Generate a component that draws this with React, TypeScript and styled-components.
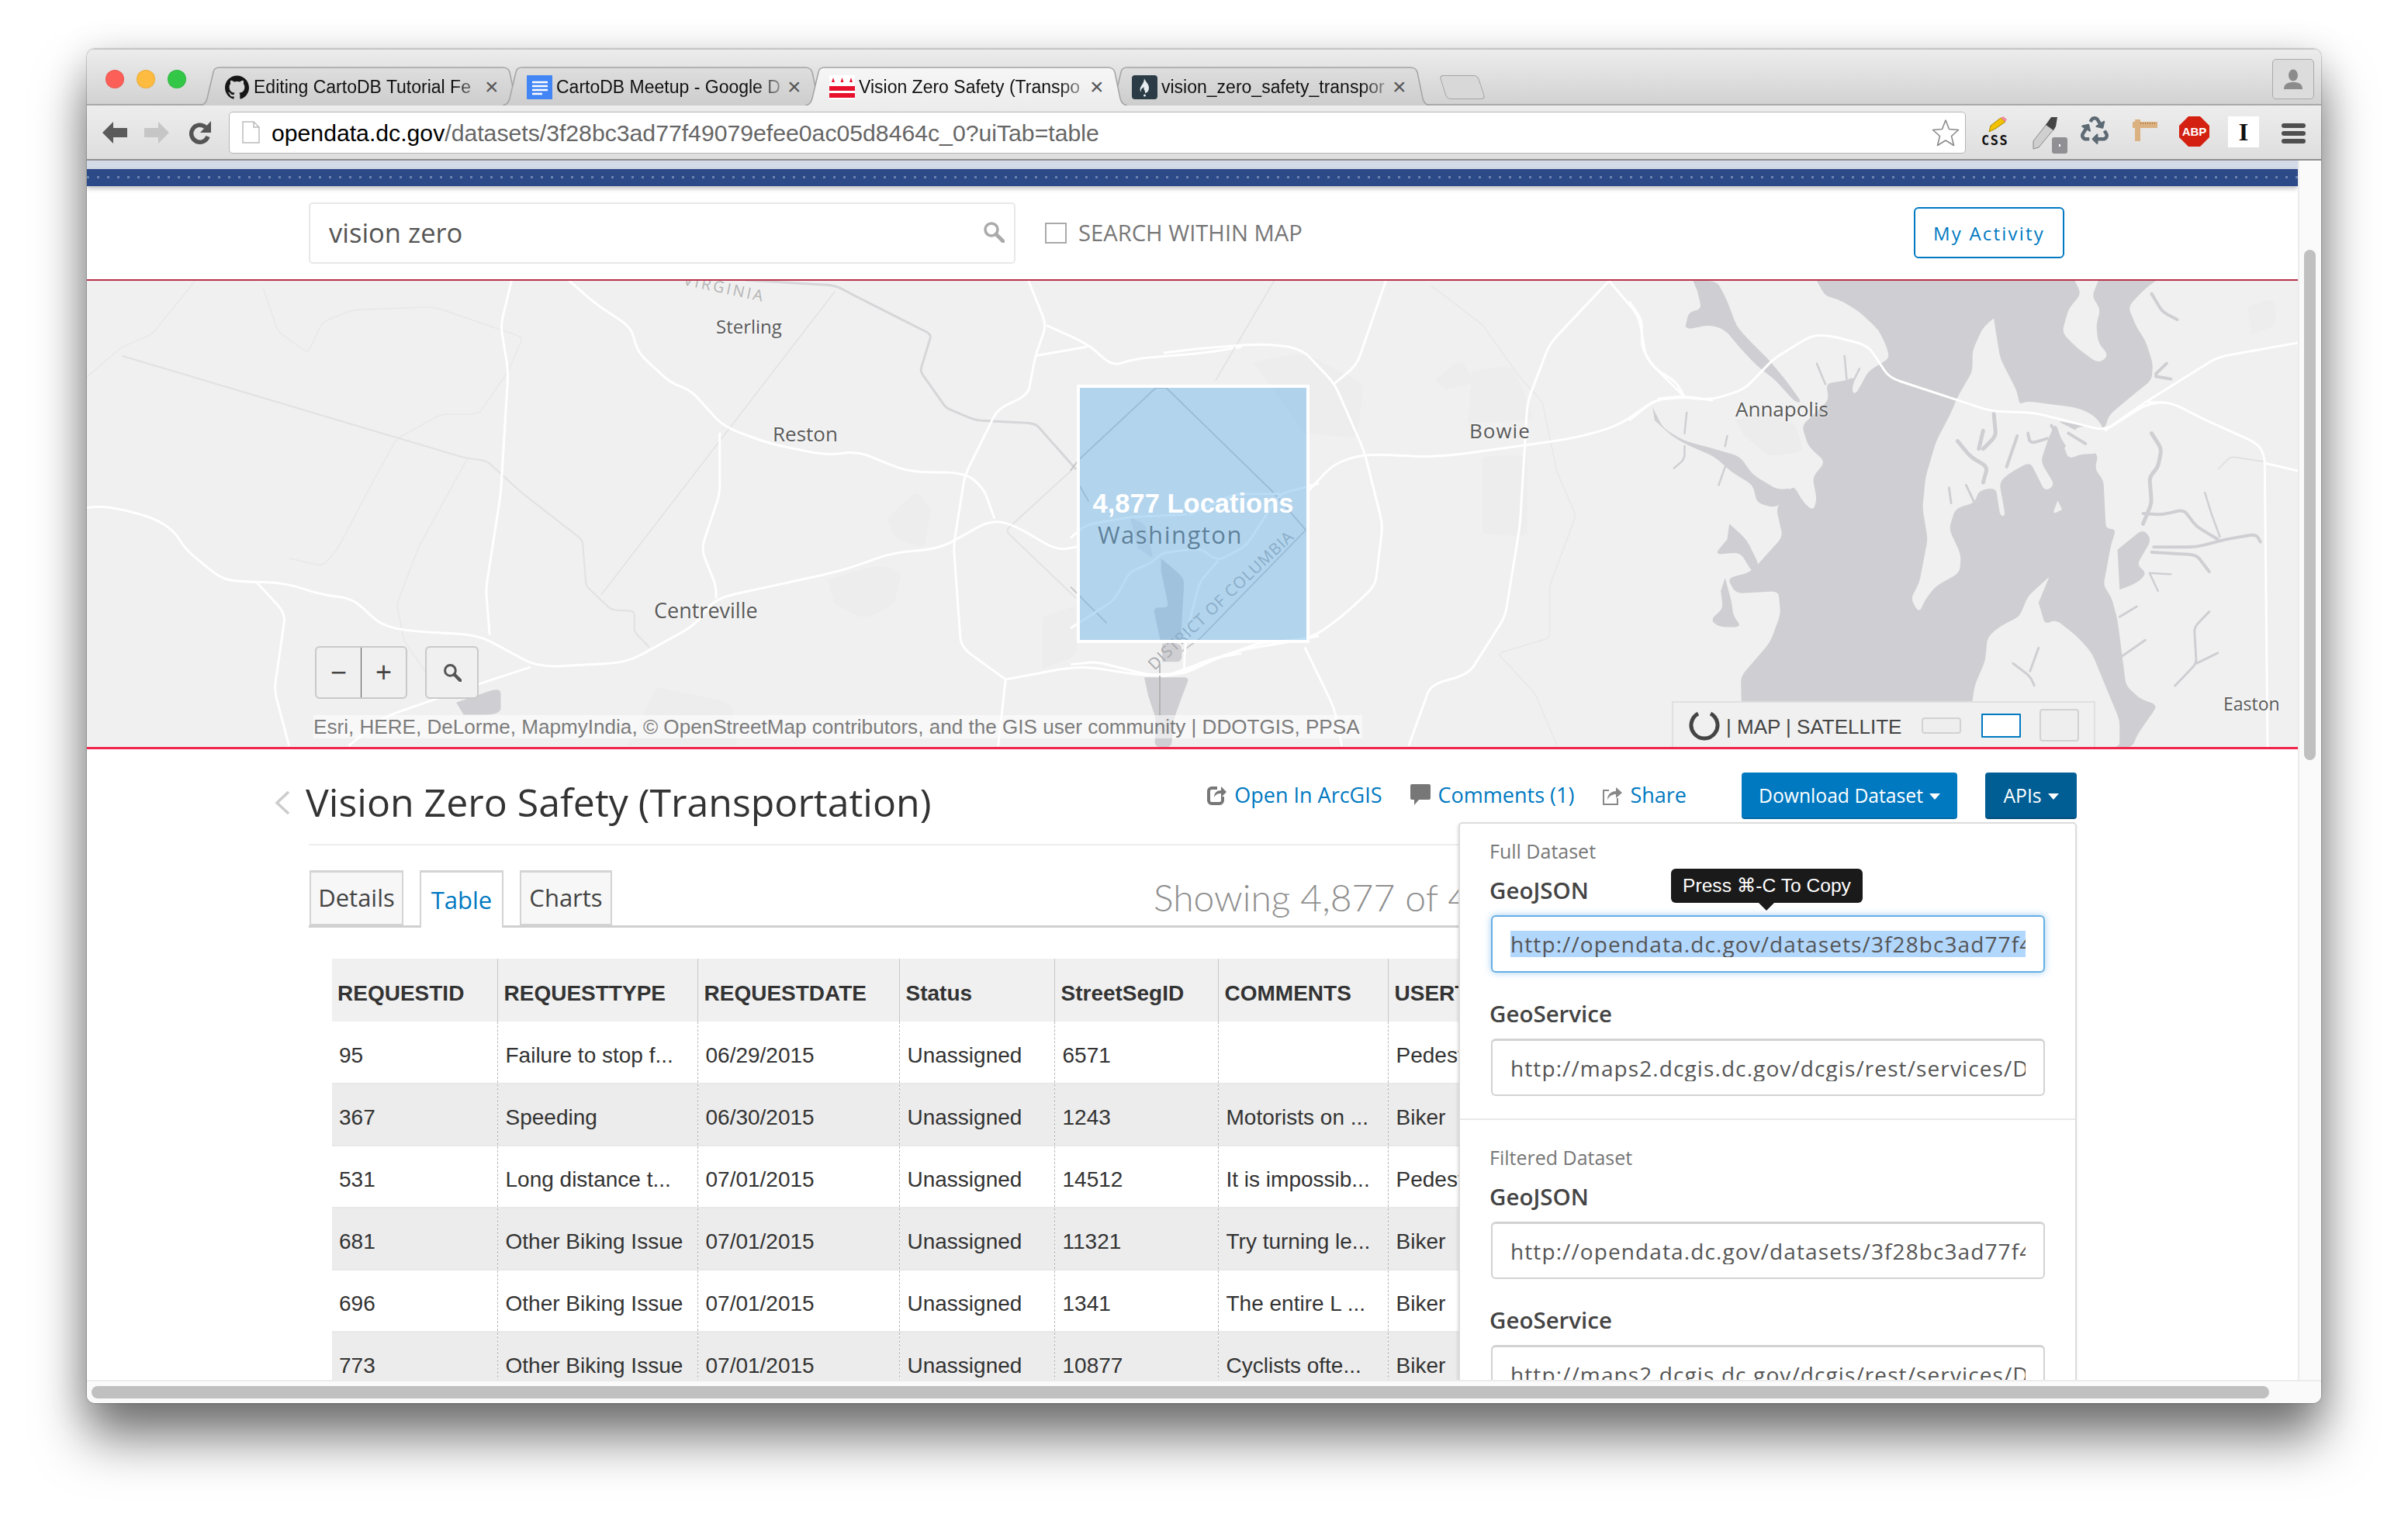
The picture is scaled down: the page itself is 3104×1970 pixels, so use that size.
import styled, { createGlobalStyle } from "styled-components";
import { SiGithub } from "react-icons/si";
import { FaRecycle } from "react-icons/fa";

const GlobalStyle = createGlobalStyle`
  html, body {
    margin: 0;
    padding: 0;
    width: 3104px;
    height: 1970px;
    overflow: hidden;
    background: #fff;
  }
  * { box-sizing: border-box; }
`;

const Desktop = styled.div`
  width: 3104px;
  height: 1970px;
  padding: 63px 0 0 112px;
  font-family: "Open Sans", "Liberation Sans", sans-serif;
`;

const Win = styled.div`
  width: 2880px;
  height: 1746px;
  display: flex;
  flex-direction: column;
  border-radius: 10px;
  background: #fff;
  overflow: hidden;
  box-shadow: 0 46px 66px rgba(0, 0, 0, 0.5), 0 0 2px rgba(0, 0, 0, 0.55), 0 10px 50px rgba(0, 0, 0, 0.18);
`;

/* ---------- browser chrome ---------- */

const TabStrip = styled.div`
  height: 73px;
  flex: none;
  display: flex;
  padding-left: 24px;
  background: linear-gradient(#ececec, #d2d2d2);
  border-top: 1px solid #c4c4c4;
  border-bottom: 2px solid #a9a9a9;
`;

const Lights = styled.div`
  display: flex;
  gap: 16px;
  padding-top: 26px;
`;

const Light = styled.div<{ $c: string }>`
  width: 24px;
  height: 24px;
  border-radius: 50%;
  background: ${(p) => p.$c};
  border: 1px solid rgba(0, 0, 0, 0.08);
`;

const Tabs = styled.div`
  display: flex;
  align-items: flex-end;
  margin-left: 18px;
  margin-bottom: -2px;
`;

const TabEl = styled.div<{ $active?: boolean }>`
  position: relative;
  width: 415px;
  height: 50px;
  margin-right: -25px;
  display: flex;
  align-items: center;
  padding: 2px 34px 0 31px;
  z-index: ${(p) => (p.$active ? 2 : 1)};
`;

const TabShape = styled.svg`
  position: absolute;
  left: 0;
  top: 0;
  width: 415px;
  height: 50px;
`;

const TabIcon = styled.div`
  position: relative;
  width: 33px;
  height: 31px;
  flex: none;
  display: flex;
  align-items: center;
  justify-content: center;
  margin-right: 5px;
`;

const TabLabel = styled.div`
  position: relative;
  flex: 1;
  overflow: hidden;
  white-space: nowrap;
  font: 23px/34px "Liberation Sans", sans-serif;
  color: #111;
  -webkit-mask-image: linear-gradient(90deg, #000 88%, rgba(0, 0, 0, 0.25) 100%);
  mask-image: linear-gradient(90deg, #000 88%, rgba(0, 0, 0, 0.25) 100%);
`;

const TabClose = styled.div`
  position: relative;
  flex: none;
  width: 14px;
  margin-left: 5px;
  font: 30px/24px "Liberation Sans", sans-serif;
  color: #555;
  text-align: center;
`;

const NewTab = styled.div`
  width: 50px;
  height: 31px;
  margin: 0 0 8px 42px;
  transform: skewX(18deg);
  border: 1px solid #a5a5a5;
  border-radius: 5px;
  background: #d8d8d8;
`;

const ProfileBtn = styled.div`
  width: 54px;
  height: 52px;
  margin: 12px 9px 0 auto;
  border: 1px solid #aaa;
  border-radius: 5px;
  display: flex;
  align-items: center;
  justify-content: center;
  background: #dcdcdc;
`;

const Toolbar = styled.div`
  height: 71px;
  flex: none;
  display: flex;
  align-items: center;
  padding: 0 0 0 20px;
  background: linear-gradient(#ededed, #dedede);
  border-bottom: 2px solid #8f8f8f;
`;

const NavIcon = styled.svg<{ $ml: number }>`
  flex: none;
  margin-left: ${(p) => p.$ml}px;
`;

const Address = styled.div`
  width: 2239px;
  height: 54px;
  margin-left: 23px;
  flex: none;
  display: flex;
  align-items: center;
  padding: 0 7px 0 16px;
  background: #fff;
  border: 1px solid #b4b4b4;
  border-radius: 5px;
`;

const Url = styled.div`
  margin-left: 15px;
  padding-top: 2px;
  flex: 1;
  font: 30.2px/40px "Liberation Sans", sans-serif;
  color: #666;
  white-space: nowrap;
`;

const Domain = styled.span`
  color: #000;
`;

const Ext = styled.div<{ $w: number; $ml: number }>`
  position: relative;
  flex: none;
  width: ${(p) => p.$w}px;
  height: 42px;
  margin-left: ${(p) => p.$ml}px;
`;

const CssWord = styled.div`
  position: absolute;
  left: 0;
  top: 24px;
  font: bold 17px/15px "DejaVu Sans Mono", monospace;
  letter-spacing: 1.5px;
  color: #111;
`;

const BlockI = styled.div`
  height: 40px;
  background: #fff;
  text-align: center;
  font: bold 32px/40px "Liberation Serif", serif;
  color: #111;
`;

const Burger = styled.div`
  display: flex;
  flex-direction: column;
  gap: 4px;
  padding-top: 9px;
`;

const BurgerBar = styled.div`
  height: 6px;
  border-radius: 3px;
  background: #4f4f4f;
`;

/* ---------- viewport ---------- */

const Viewport = styled.div`
  flex: 1;
  min-height: 0;
  display: flex;
`;

const Page = styled.div`
  width: 2850px;
  flex: none;
  overflow: hidden;
  display: flex;
  flex-direction: column;
`;

const VTrack = styled.div`
  flex: 1;
  background: #fafafa;
  border-left: 2px solid #ececec;
  padding: 115px 7px 0 6px;
`;

const VThumb = styled.div`
  height: 658px;
  border-radius: 8px;
  background: #c0c0c0;
`;

const HTrack = styled.div`
  height: 30px;
  flex: none;
  background: #fafafa;
  border-top: 2px solid #ececec;
  padding: 6px 0 0 6px;
`;

const HThumb = styled.div`
  width: 2807px;
  height: 16px;
  border-radius: 8px;
  background: #c0c0c0;
`;

const Stripe = styled.div`
  height: 11px;
  flex: none;
  background: #d3dae8;
`;

const BlueBand = styled.div`
  height: 22px;
  flex: none;
  background-color: #2c4a87;
  background-image: repeating-linear-gradient(90deg, #6d84b2 0 3px, transparent 3px 13px);
  background-size: 100% 3px;
  background-position: 0 9px;
  background-repeat: no-repeat;
  box-shadow: 0 3px 6px rgba(0, 0, 0, 0.25);
`;

const SearchRow = styled.div`
  height: 122px;
  flex: none;
  display: flex;
  align-items: center;
  padding: 0 301px 0 286px;
  border-bottom: 2px solid #b8324a;
`;

const SearchBox = styled.div`
  width: 911px;
  height: 79px;
  display: flex;
  align-items: center;
  justify-content: space-between;
  padding: 0 12px 2px 24px;
  border: 2px solid #e8e8e8;
  border-radius: 5px;
  font-size: 34.5px;
  color: #555;
`;

const Check = styled.div`
  width: 28px;
  height: 27px;
  margin-left: 38px;
  border: 2px solid #aaa;
`;

const CheckText = styled.div`
  margin-left: 15px;
  font-size: 29.2px;
  color: #777;
`;

const ActivityBtn = styled.div`
  margin-left: auto;
  width: 194px;
  height: 66px;
  display: flex;
  align-items: center;
  justify-content: center;
  border: 2px solid #0079c1;
  border-radius: 6px;
  font-size: 24px;
  letter-spacing: 2.2px;
  color: #0079c1;
`;

const MapArea = styled.div`
  position: relative;
  height: 604px;
  flex: none;
  overflow: hidden;
  background: #f0f0f0;
  border-bottom: 3px solid #f0254a;
`;

const MapArt = styled.svg`
  position: absolute;
  left: 0;
  top: 0;
  width: 2850px;
  height: 602px;
`;

const City = styled.span<{ $x: number; $y: number; $size: number; $track?: number }>`
  position: absolute;
  left: ${(p) => p.$x}px;
  top: ${(p) => p.$y}px;
  font-size: ${(p) => p.$size}px;
  letter-spacing: ${(p) => p.$track ?? 0}px;
  line-height: 34px;
  white-space: nowrap;
  color: #5a5a5a;
  text-shadow: 0 0 3px #fff;
`;

const ClusterBox = styled.div`
  position: absolute;
  left: 1276px;
  top: 134px;
  width: 300px;
  height: 333px;
  border: 4px solid #fff;
  background: rgba(102, 177, 233, 0.45);
  text-align: center;
`;

const ClusterText = styled.div`
  margin-top: 129px;
  font: bold 34.5px/40px "Liberation Sans", sans-serif;
  color: #fff;
`;

const ZoomGroup = styled.div`
  position: absolute;
  left: 294px;
  top: 471px;
  display: flex;
  gap: 23px;
`;

const ZoomPair = styled.div`
  width: 119px;
  height: 68px;
  display: flex;
  border: 2px solid #c9c9c9;
  border-radius: 6px;
  background: #f0f0f0;
`;

const ZoomCell = styled.div<{ $sep?: boolean }>`
  flex: 1;
  display: flex;
  align-items: center;
  justify-content: center;
  font: 36px/32px "Liberation Sans", sans-serif;
  color: #444;
  border-left: ${(p) => (p.$sep ? "1px solid #555" : "none")};
`;

const ZoomSearch = styled.div`
  width: 69px;
  height: 68px;
  display: flex;
  align-items: center;
  justify-content: center;
  border: 2px solid #c9c9c9;
  border-radius: 6px;
  background: #f0f0f0;
`;

const Attribution = styled.div`
  position: absolute;
  left: 292px;
  top: 560px;
  height: 30px;
  padding-right: 3px;
  background: rgba(255, 255, 255, 0.55);
  font: 26.1px/30px "Liberation Sans", sans-serif;
  color: #7c7c7c;
  white-space: nowrap;
`;

const Basemap = styled.div`
  position: absolute;
  left: 2043px;
  top: 542px;
  width: 546px;
  height: 60px;
  display: flex;
  align-items: center;
  padding-left: 20px;
  background: #f0f0f0;
  border: 2px solid #e0e0e0;
  border-bottom: none;
  font: 26px/30px "Liberation Sans", sans-serif;
  color: #444;
`;

const BasemapWord = styled.span`
  margin-left: 8px;
  padding-top: 3px;
  white-space: pre;
`;

const Swatch = styled.div<{ $w: number; $h: number; $ml: number; $on?: boolean }>`
  width: ${(p) => p.$w}px;
  height: ${(p) => p.$h}px;
  flex: none;
  margin-left: ${(p) => p.$ml}px;
  border-radius: ${(p) => (p.$on ? 1 : 4)}px;
  border: 2px solid ${(p) => (p.$on ? "#0079c1" : "#d2d2d2")};
  background: ${(p) => (p.$on ? "#fff" : "#eee")};
`;

/* ---------- details ---------- */

const Detail = styled.div`
  position: relative;
  flex: 1;
  min-height: 0;
  padding-left: 286px;
`;

const Inner = styled.div`
  width: 2279px;
`;

const TitleRow = styled.div`
  height: 124px;
  display: flex;
  align-items: flex-start;
  padding-top: 30px;
  border-bottom: 2px solid #eee;
`;

const Back = styled.svg`
  flex: none;
  margin: 24px 19px 0 -44px;
`;

const Title = styled.h1`
  margin: -1px 0 0 1px;
  font-size: 50px;
  line-height: 78px;
  font-weight: 400;
  color: #333;
  white-space: nowrap;
`;

const ActionBar = styled.div`
  margin-left: auto;
  display: flex;
  gap: 36px;
  align-items: center;
  height: 60px;
`;

const ActionLink = styled.div`
  display: flex;
  align-items: center;
  gap: 10px;
  padding-bottom: 3px;
  font-size: 27px;
  color: #0079c1;
  white-space: nowrap;
`;

const PrimaryBtn = styled.div<{ $w: number; $dark?: boolean; $ml?: number }>`
  width: ${(p) => p.$w}px;
  height: 60px;
  margin-left: ${(p) => p.$ml ?? 0}px;
  display: flex;
  align-items: center;
  justify-content: center;
  gap: 8px;
  border-radius: 4px;
  font-size: 24.7px;
  color: #fff;
  background: ${(p) => (p.$dark ? "#005e95" : "#0079c1")};
  border-bottom: 2px solid ${(p) => (p.$dark ? "#004d7a" : "#0068a6")};
  white-space: nowrap;
`;

const Caret = styled.span`
  width: 0;
  height: 0;
  margin-top: 3px;
  border-left: 7px solid transparent;
  border-right: 7px solid transparent;
  border-top: 8px solid #fff;
`;

const TabBar = styled.div`
  height: 74px;
  margin-top: 32px;
  display: flex;
  align-items: flex-end;
  padding-left: 1px;
  border-bottom: 3px solid #d0d0d0;
`;

const PageTab = styled.div<{ $w: number; $active?: boolean; $ml?: number }>`
  width: ${(p) => p.$w}px;
  height: ${(p) => (p.$active ? 74 : 71)}px;
  margin-left: ${(p) => p.$ml ?? 0}px;
  margin-bottom: ${(p) => (p.$active ? -3 : 0)}px;
  display: flex;
  align-items: center;
  justify-content: center;
  padding-bottom: 2px;
  font-size: 31px;
  background: ${(p) => (p.$active ? "#fff" : "#f7f7f7")};
  color: ${(p) => (p.$active ? "#0079c1" : "#444")};
  border: 2px solid #d4d4d4;
  border-bottom: ${(p) => (p.$active ? "none" : "2px solid #d4d4d4")};
  border-top-width: 3px;
`;

const Showing = styled.div`
  margin-left: 698px;
  align-self: center;
  padding-bottom: 2px;
  font-family: Lato, "Open Sans", sans-serif;
  font-size: 48px;
  font-weight: 300;
  color: #8f8f8f;
  white-space: nowrap;
`;

const TableWrap = styled.div`
  margin: 40px 0 0 30px;
`;

const DataTable = styled.table`
  width: 1500px;
  table-layout: fixed;
  border-collapse: collapse;
  font-family: "Liberation Sans", sans-serif;
  color: #333;
`;

const Th = styled.th`
  height: 81px;
  padding: 8px 0 0 8px;
  text-align: left;
  font-size: 28px;
  font-weight: 700;
  background: #f0f0f0;
  border-left: 1px solid #c8c8c8;
  white-space: nowrap;
  overflow: hidden;
  &:first-child { border-left: none; padding-left: 7px; }
`;

const Tr = styled.tr<{ $alt: boolean }>`
  height: 80px;
  background: ${(p) => (p.$alt ? "#ececec" : "#fff")};
  border-bottom: 2px solid #e8e8e8;
`;

const Td = styled.td`
  padding: 8px 0 0 10px;
  font-size: 28px;
  border-left: 1px dashed #b9b9b9;
  white-space: nowrap;
  overflow: hidden;
  &:first-child { border-left: none; padding-left: 9px; }
`;

const Panel = styled.div`
  position: absolute;
  left: 1768px;
  top: 94px;
  width: 797px;
  z-index: 3;
  background: #fff;
  border: 2px solid #dcdcdc;
  border-radius: 5px 5px 0 0;
  box-shadow: -1px 2px 4px rgba(0, 0, 0, 0.12);
`;

const PanelSection = styled.div<{ $first?: boolean }>`
  padding: ${(p) => (p.$first ? "19px 38px 29px" : "32px 38px 60px")};
  border-bottom: ${(p) => (p.$first ? "2px solid #e8e8e8" : "none")};
`;

const SectionName = styled.div`
  font-size: 25px;
  line-height: 32px;
  color: #777;
`;

const FieldLabel = styled.div<{ $gap: number }>`
  margin-top: ${(p) => p.$gap}px;
  font-size: 29.5px;
  line-height: 40px;
  font-weight: 600;
  color: #444;
`;

const Field = styled.div<{ $focus?: boolean }>`
  width: 714px;
  height: 74px;
  margin: 12px 0 0 2px;
  padding: 0 23px;
  display: flex;
  align-items: center;
  background: #fff;
  border: 2px solid ${(p) => (p.$focus ? "#66aee6" : "#d2d2d2")};
  border-top-width: ${(p) => (p.$focus ? 2 : 3)}px;
  border-radius: 6px;
  box-shadow: ${(p) => (p.$focus ? "0 0 10px rgba(102, 175, 233, 0.6)" : "none")};
`;

const FieldText = styled.div<{ $selected?: boolean }>`
  width: 100%;
  overflow: hidden;
  white-space: nowrap;
  font-size: 28px;
  line-height: 34px;
  letter-spacing: 1.1px;
  color: #555;
  background: ${(p) => (p.$selected ? "#b2d7fd" : "transparent")};
`;

const Tip = styled.div`
  position: absolute;
  left: 272px;
  top: 58px;
  width: 247px;
  height: 44px;
  border-radius: 6px;
  background: #1a1a1a;
  color: #fff;
  font: 24.6px/44px "Liberation Sans", "DejaVu Sans", sans-serif;
  text-align: center;
  &::after {
    content: "";
    position: absolute;
    left: 113px;
    top: 44px;
    border-left: 10px solid transparent;
    border-right: 10px solid transparent;
    border-top: 10px solid #1a1a1a;
  }
`;

const COLS = [213, 258, 260, 200, 211, 219, 139];
const HEAD = ["REQUESTID", "REQUESTTYPE", "REQUESTDATE", "Status", "StreetSegID", "COMMENTS", "USERTYPE"];
const ROWS = [
  ["95", "Failure to stop f...", "06/29/2015", "Unassigned", "6571", "", "Pedestrian"],
  ["367", "Speeding", "06/30/2015", "Unassigned", "1243", "Motorists on ...", "Biker"],
  ["531", "Long distance t...", "07/01/2015", "Unassigned", "14512", "It is impossib...", "Pedestrian"],
  ["681", "Other Biking Issue", "07/01/2015", "Unassigned", "11321", "Try turning le...", "Biker"],
  ["696", "Other Biking Issue", "07/01/2015", "Unassigned", "1341", "The entire L ...", "Biker"],
  ["773", "Other Biking Issue", "07/01/2015", "Unassigned", "10877", "Cyclists ofte...", "Biker"],
];

const TAB_PATH = "M0,50 Q7,49 9,41 L17,7 Q18,1 25,1 H390 Q397,1 399,7 L406,41 Q408,49 415,50";

function ChromeTab({ active, icon, label }: { active?: boolean; icon: React.ReactNode; label: string }) {
  const id = active ? "tabOn" : "tabOff";
  return (
    <TabEl $active={active}>
      <TabShape viewBox="0 0 415 50">
        <path d={TAB_PATH} fill={`url(#${id})`} stroke="#a3a3a3" strokeWidth="1.5" />
      </TabShape>
      <TabIcon>{icon}</TabIcon>
      <TabLabel>{label}</TabLabel>
      <TabClose>×</TabClose>
    </TabEl>
  );
}

const DocsIcon = () => (
  <svg width="33" height="31" viewBox="0 0 33 31">
    <rect width="33" height="31" rx="1" fill="#4285f4" />
    <path d="M7 9h20M7 14h20M7 19h20M7 24h13" stroke="#fff" strokeWidth="2.4" />
  </svg>
);

const FlagIcon = () => (
  <svg width="33" height="31" viewBox="0 0 33 31">
    <rect width="33" height="31" fill="#fff" />
    <path d="M0 14h33v6H0zM0 23h33v6H0z" fill="#e8112d" />
    <path d="M5 3l2 6H3zM16.500 3l2 6h-4zM28 3l2 6h-4z" fill="#e8112d" />
  </svg>
);

const FlameIcon = () => (
  <svg width="33" height="31" viewBox="0 0 33 31">
    <rect width="33" height="31" rx="4" fill="#2b3c46" />
    <path d="M16 4c1 4 6 7 6 12s-3 7-5 7c1-3-3-5-1-8-3 2-5 3-4 7-2-2-2-5 0-8s4-6 4-10z" fill="#e8eef0" />
    <circle cx="16.500" cy="26" r="1.500" fill="#e8eef0" />
  </svg>
);

// rounds the corners of the traced polylines so roads and shores do not look faceted
function soft(d: string, r = 30) {
  return d
    .split("M")
    .filter((s) => s.trim())
    .map((seg) => {
      const closed = seg.includes("Z");
      const pts = seg
        .replace("Z", "")
        .trim()
        .split(/\s*L\s*/)
        .map((p) => p.split(",").map(Number));
      let out = `M${pts[0]}`;
      for (let i = 1; i < pts.length - 1; i++) {
        const [x, y] = pts[i];
        const [ax, ay] = pts[i - 1];
        const [bx, by] = pts[i + 1];
        const la = Math.hypot(ax - x, ay - y) || 1;
        const lb = Math.hypot(bx - x, by - y) || 1;
        const ta = Math.min(r, la / 2) / la;
        const tb = Math.min(r, lb / 2) / lb;
        out += ` L${x + (ax - x) * ta},${y + (ay - y) * ta} Q${x},${y} ${x + (bx - x) * tb},${y + (by - y) * tb}`;
      }
      out += ` L${pts[pts.length - 1]}`;
      return closed ? out + "Z" : out;
    })
    .join(" ");
}

const RoadW = ({ d, w = 3 }: { d: string; w?: number }) => (
  <path d={soft(d)} fill="none" stroke="#fff" strokeWidth={w} strokeLinejoin="round" vectorEffect="non-scaling-stroke" />
);
const Faint = ({ d, c = "#e8e8e8", w = 1.6 }: { d: string; c?: string; w?: number }) => (
  <path d={soft(d, 12)} fill="none" stroke={c} strokeWidth={w} strokeLinejoin="round" vectorEffect="non-scaling-stroke" />
);
const Wet = ({ d, w = 4 }: { d: string; w?: number }) => (
  <path d={soft(d, 18)} fill="none" stroke="#cfcfd3" strokeWidth={w} strokeLinejoin="round" strokeLinecap="round" vectorEffect="non-scaling-stroke" />
);
const Shape = ({ d, c }: { d: string; c: string }) => <path d={soft(d, 22)} fill={c} />;

// the basemap, traced from crops of the map, each group keeps the coordinates of its crop
function MapDrawing() {
  const water = "#cfcfd3";
  const land = "#f0f0f0";
  return (
    <MapArt viewBox="112 362 2850 602">
      <g transform="translate(100 360) scale(0.957 0.3954)">
        <Shape d="M1090,780 L1130,690 L1150,750 L1140,880 L1100,840Z M1010,980 L1080,930 L1110,950 L1100,1060 L1060,1110 L1020,1060Z M780,1330 L880,1380 L890,1520 L740,1520Z M1300,1100 L1350,1060 L1345,1230 L1300,1270Z" c="#ededed" />
        <Shape d="M510,1380 L570,1330 L570,1420 L520,1420Z" c={water} />
        <Faint d="M160,0 L100,180 L60,220 L12,320" />
        <Faint d="M250,30 L270,170 L310,240 L330,140 L370,100 L480,90 L600,190 L580,300 L540,440 L490,440 L430,520 L400,650 L350,880 L330,935 L285,910" />
        <Faint d="M60,250 L525,585 L550,590 L600,700 L680,850 L685,1000 L720,1080 L750,1080 L750,1150 L770,1200" c="#e2e2e2" w={2.200} />
        <Faint d="M525,585 L460,870 L430,1060 L440,1180 L480,1320" />
        <Faint d="M1020,40 L705,1030" c="#e2e2e2" />
        <Faint d="M1340,620 L1250,820 L1345,1040" c="#e0e0e0" />
        <Faint d="M900,3 L1020,20 L1060,70 L1150,180 L1135,300 L1170,420 L1210,460 L1290,470 L1345,620" c="#d6d6d9" w={3} />
        <RoadW d="M12,745 L40,740 L100,775 L130,820 L145,880 L190,970 L210,985 L280,990 L330,1030 L370,1040 L410,1130 L450,1148 L540,1160 L620,1265 L740,1250 L830,1130 L860,1040 L1030,950 L1100,890 L1160,880 L1230,785 L1260,800 L1320,885 L1350,870" />
        <RoadW d="M660,0 L700,85 L745,155 L755,240 L800,340 L825,360 L870,480 L930,535 L1010,575 L1050,560 L1120,630 L1195,630 L1220,680 L1235,780" />
        <RoadW d="M585,0 L570,150 L580,300 L570,700 L550,1010 L555,1160" />
        <RoadW d="M865,500 L865,700 L840,880 L860,1000 L860,1040" />
        <RoadW d="M1280,0 L1305,150 L1290,250 L1280,380 L1240,420 L1195,640 L1180,870 L1190,1200 L1250,1305" />
        <RoadW d="M1305,150 L1360,210 L1395,285 L1420,260 L1520,240 L1568,220 M1290,250 L1360,220" />
        <RoadW d="M240,985 L280,1090 L265,1340 L285,1522" />
        <RoadW d="M1250,1305 L1240,1522 M1250,1305 L1350,1260 L1430,1290 L1480,1295 L1520,1240 L1568,1220" />
        <RoadW d="M610,1265 L540,1320 L410,1430 L365,1522" />
      </g>
      <g transform="translate(1500 360) scale(0.957 0.3954)">
        <Shape d="M120,270 L190,240 L270,340 L260,520 L190,500Z M365,330 L400,260 L420,340 L380,360Z M415,300 L470,280 L500,460 L410,470Z M430,580 L490,570 L490,840 L430,830Z M1460,90 L1495,60 L1500,150 L1465,180Z" c="#ededed" />
        <Faint d="M150,0 L70,330" c="#e2e2e2" />
        <Faint d="M360,20 L430,150 L480,320 L510,400 L530,630 L555,770 L520,1000 L520,1170 L450,1220 L500,1350 L530,1522" />
        <RoadW d="M0,240 L50,225 L135,210 L185,225 L230,340 L270,560 L295,800 L285,1000 L240,1100 L200,1170 L100,1210 L30,1270 L0,1295" />
        <RoadW d="M600,5 L640,120 L650,260 L700,380" />
        <RoadW d="M600,5 L520,210 L490,400 L480,800 L460,1100 L410,1290 L360,1320 L330,1522" />
        <RoadW d="M195,690 L230,600 L270,570 L370,580 L430,560 L550,520 L610,480 L665,390 L627,456" />
        <RoadW d="M665,390 L700,380 L740,395" />
        <RoadW d="M300,0 L260,280 L230,340" />
        <RoadW d="M190,1200 L230,1400 L240,1522" />
      </g>
      <g transform="translate(2100 362) scale(0.5498 0.3333)">
        <Shape
          d="M440,0 L460,60 L490,70 L540,120 L585,190 L605,260 L610,300 L590,320 L560,350 L545,400 L530,440 L522,425 L530,370 L500,390 L462,395 L468,460 L450,490 L405,560 L420,640 L460,700 L430,760 L440,845 L432,890 L410,860 L385,790 L345,880 L360,990 L300,1100 L280,1130 L230,1150 L250,1210 L350,1200 L355,1290 L330,1400 L262,1530 L265,1806 L1180,1806 L1190,1760 L1240,1640 L1200,1620 L1165,1566 L1145,1310 L1130,1220 L1112,1180 L1130,1020 L1142,960 L1118,960 L1112,770 L1092,730 L1100,670 L1070,645 L1075,610 L1040,580 L1060,560 L1115,575 L1125,520 L1190,430 L1225,385 L1228,320 L1210,230 L1190,180 L1170,100 L1210,30 L1235,0Z"
          c={water}
        />
        <Shape d="M1045,0 L1060,50 L1030,110 L1015,200 L1050,260 L1100,320 L1125,290 L1100,240 L1095,170 L1105,110 L1085,60 L1100,0Z" c={land} />
        <Shape d="M855,145 L830,180 L805,270 L805,350 L770,450 L755,510 L720,620 L695,760 L688,880 L700,1000 L680,1170 L660,1230 L680,1285 L695,1230 L720,1180 L775,1130 L778,1060 L750,960 L765,880 L810,860 L820,810 L860,800 L870,910 L882,910 L868,780 L890,745 L940,700 L975,815 L998,790 L965,700 L985,600 L1000,550 L1030,690 L1060,670 L1100,670 L1075,610 L1045,575 L1000,540 L1060,560 L1115,575 L1090,520 L1050,490 L1000,480 L930,465 L915,480 L910,430 L870,300 L860,200Z" c={land} />
        <Shape d="M1005,850 L992,905 L1015,885Z" c={land} />
        <Shape d="M985,1145 L935,1220 L915,1300 L870,1335 L840,1380 L835,1470 L810,1566 L790,1806 L1150,1806 L1150,1700 L1110,1540 L1085,1440 L1050,1375 L1000,1310 L975,1330 L960,1245Z" c={land} />
        <Shape d="M150,0 L205,0 L225,60 L240,120 L250,170 L275,220 L300,260 L330,310 L365,380 L405,470 L390,470 L340,380 L300,330 L260,260 L225,190 L190,170 L130,190 L140,120 L170,110 L160,40Z" c={water} />
        <Shape d="M55,490 L80,570 L130,620 L200,650 L260,680 L290,750 L350,810 L385,800 L345,880 L300,860 L290,790 L240,740 L200,680 L130,630 L100,600 L60,540Z" c={water} />
        <Shape d="M235,940 L275,1000 L305,1100 L290,1130 L260,1050 L200,1060 L230,1000Z" c={water} />
        <Shape d="M225,1150 L240,1240 L245,1300 L265,1340 L210,1340 L190,1310 L220,1270 L215,1200Z" c={water} />
        <Shape d="M1145,1040 L1205,960 L1225,1000 L1190,1100 L1215,1130 L1190,1170 L1150,1195Z" c={water} />
        <Wet d="M130,640 L130,690 L105,725 M225,720 L210,790 M135,510 L130,590 M230,600 L225,640" w={2.500} />
        <Wet d="M440,320 L460,400 M505,290 L510,380 M540,340 L525,390" w={2.500} />
        <Wet d="M770,620 L800,680 L840,720 L830,780 M830,580 L820,650 M855,515 L860,600 L830,650" w={5} />
        <Wet d="M910,600 L885,720 M935,590 L940,630 L980,610 M990,560 L1020,640 M1030,590 L1070,630" w={4} />
        <Wet d="M750,800 L755,860 M790,790 L810,860" w={3} />
        <Wet d="M1225,590 L1248,650 L1240,720 L1220,760 L1225,860 L1205,940" w={5} />
        <Wet d="M1205,900 L1250,905 L1300,885 L1330,950 L1380,1000 M1230,1030 L1330,1030 L1400,1000 L1470,980 L1480,1010 M1225,1050 L1330,1060 L1360,1125" w={4} />
        <Wet d="M1350,820 L1365,900 L1385,990 M1220,1130 L1270,1135 M1220,1130 L1240,1200" w={2.500} />
        <Wet d="M1210,1390 L1140,1470 M1360,1280 L1325,1340 L1330,1480 L1280,1566 M1380,1440 L1330,1480 M1190,1260 L1150,1300" w={3} />
        <Wet d="M900,1480 L940,1530 L950,1566 M960,1420 L940,1510" w={3} />
        <Wet d="M1235,360 L1260,320 M1235,370 L1270,380 M1225,50 L1250,120 L1285,150" w={4} />
        <Shape d="M250,540 L330,500 L390,560 L410,660 L330,680 L270,600Z" c="#ececec" />
        <Faint d="M1380,730 L1410,680 L1490,700" c="#dedee0" />
        <RoadW d="M0,540 L60,460 L130,450 L190,462 L270,420 L340,300 L430,210 L470,212 L560,250 L610,375 L850,505 L950,510 L1115,580 L1210,480 L1250,470" />
        <RoadW d="M1115,580 L1210,470 L1380,295 L1568,240" />
        <RoadW d="M0,80 L30,150 L30,260 L60,340 L110,390 L130,450" />
        <RoadW d="M1215,470 L1270,470 L1340,530 L1475,630 L1490,680 L1497,1806" />
        <RoadW d="M1490,705 L1568,735" />
      </g>
      <g transform="translate(1380 490) scale(0.3333)">
        <Shape d="M350,690 L410,740 L440,770 L425,1020 L350,1020 L320,880 L380,880 L350,740Z M355,1020 L430,1020 L430,1090 L355,1090Z M285,1150 L460,1150 L440,1200 L400,1310 L390,1420 L325,1420 L330,1310 L300,1220Z" c={water} />
        <Shape d="M230,530 L290,560 L320,690 L260,650Z" c="#e0e0e2" />
        <path d="M0,350 L30,310 L330,30 L370,30 L780,430 L910,580 L500,1000 L430,1050 M36,410 L70,470 M0,800 L140,940" fill="none" stroke="#c4c4c6" strokeWidth="1.800" vectorEffect="non-scaling-stroke" />
        <Faint d="M345,1100 L345,1300" c="#aaa" />
        <RoadW d="M0,960 L170,850 L230,740 L310,710 L350,670 L500,650 L570,700 L680,640 L810,440 L960,400" />
        <RoadW d="M570,700 L500,780 L460,930 L440,1060 L440,1135" />
        <RoadW d="M0,1100 L100,1090 L300,1140 L440,1135 L560,1080 L720,1020 L900,1000 L960,990" />
        <RoadW d="M0,610 L60,560 L230,530 L450,520 M810,440 L640,440 L460,520" />
        <text x="0" y="0" transform="translate(325 1125) rotate(-43.500)" fontFamily="Open Sans" fontSize="62" letterSpacing="3" fill="#a9a9ad">
          DISTRICT OF COLUMBIA
        </text>
      </g>
      <text x="0" y="0" transform="translate(880 367) rotate(12)" fontFamily="Open Sans" fontSize="20" letterSpacing="3" fill="#b5b5b5">
        VIRGINIA
      </text>
    </MapArt>
  );
}

function ArcgisGlyph() {
  return (
    <svg width="26" height="28" viewBox="0 0 26 28">
      <path d="M14 5H7a4 4 0 0 0-4 4v12a4 4 0 0 0 4 4h10a4 4 0 0 0 4-4v-5" fill="none" stroke="#777" strokeWidth="4" />
      <path d="M10 17c0-6 4-9 9-9V3l7 7-7 7v-5c-4 0-7 1-9 5z" fill="#777" />
    </svg>
  );
}

function BubbleGlyph() {
  return (
    <svg width="26" height="28" viewBox="0 0 26 28">
      <path d="M2 0h22a2 2 0 0 1 2 2v16a2 2 0 0 1-2 2H11l-6 7v-7H2a2 2 0 0 1-2-2V2a2 2 0 0 1 2-2z" fill="#777" />
    </svg>
  );
}

function ShareGlyph() {
  return (
    <svg width="26" height="28" viewBox="0 0 26 28">
      <path d="M9 8H2v18h18v-8" fill="none" stroke="#888" strokeWidth="2" />
      <path d="M7 20c0-7 5-11 11-11V4l8 7-8 7v-5c-5 0-8 2-11 7z" fill="#888" />
    </svg>
  );
}

function LensGlyph({ size, c }: { size: number; c: string }) {
  return (
    <svg width={size} height={size} viewBox="0 0 28 28">
      <circle cx="11" cy="11" r="8" fill="none" stroke={c} strokeWidth="3.500" />
      <path d="M17 17l9 9" stroke={c} strokeWidth="5" strokeLinecap="round" />
    </svg>
  );
}

export default function App() {
  return (
    <>
      <GlobalStyle />
      <Desktop>
        <svg width="0" height="0" style={{ position: "absolute" }}>
          <defs>
            <linearGradient id="tabOn" x1="0" y1="0" x2="0" y2="1">
              <stop offset="0" stopColor="#f6f6f6" />
              <stop offset="1" stopColor="#ededed" />
            </linearGradient>
            <linearGradient id="tabOff" x1="0" y1="0" x2="0" y2="1">
              <stop offset="0" stopColor="#dedede" />
              <stop offset="1" stopColor="#cdcdcd" />
            </linearGradient>
          </defs>
        </svg>
        <Win>
          <TabStrip>
            <Lights>
              <Light $c="#fc5f57" />
              <Light $c="#fdbb3f" />
              <Light $c="#33c748" />
            </Lights>
            <Tabs>
              <ChromeTab icon={<SiGithub size={31} color="#161616" />} label="Editing CartoDB Tutorial Fe" />
              <ChromeTab icon={<DocsIcon />} label="CartoDB Meetup - Google D" />
              <ChromeTab active icon={<FlagIcon />} label="Vision Zero Safety (Transpo" />
              <ChromeTab icon={<FlameIcon />} label="vision_zero_safety_transpor" />
              <NewTab />
            </Tabs>
            <ProfileBtn>
              <svg width="26" height="26" viewBox="0 0 26 26">
                <ellipse cx="13" cy="8" rx="6" ry="7.500" fill="#8c8c8c" />
                <path d="M1 26c0-7 5-9 12-9s12 2 12 9z" fill="#8c8c8c" />
              </svg>
            </ProfileBtn>
          </TabStrip>
          <Toolbar>
            <NavIcon $ml={0} width="32" height="30" viewBox="0 0 32 30">
              <path d="M0 15L14 1v8h18v12H14v8z" fill="#5a5a5a" />
            </NavIcon>
            <NavIcon $ml={22} width="32" height="30" viewBox="0 0 32 30">
              <path d="M32 15L18 1v8H0v12h18v8z" fill="#c6c6c6" />
            </NavIcon>
            <NavIcon $ml={26} width="28" height="30" viewBox="0 0 28 30">
              <path d="M24 20a11 11 0 1 1-3-12" fill="none" stroke="#555" strokeWidth="5.500" />
              <path d="M28 0v15H14z" fill="#555" />
            </NavIcon>
            <Address>
              <svg width="23" height="29" viewBox="0 0 23 29">
                <path d="M1 1h14l7 7v20H1z" fill="#fff" stroke="#bbb" strokeWidth="1.500" />
                <path d="M15 1v7h7" fill="none" stroke="#bbb" strokeWidth="1.500" />
              </svg>
              <Url>
                <Domain>opendata.dc.gov</Domain>/datasets/3f28bc3ad77f49079efee0ac05d8464c_0?uiTab=table
              </Url>
              <svg width="36" height="36" viewBox="0 0 36 36">
                <path d="M18 2l4.500 11.500 12 1-9 8 3 12L18 28l-10.500 6.500 3-12-9-8 12-1z" fill="#fff" stroke="#8a8a8a" strokeWidth="1.600" strokeLinejoin="round" />
              </svg>
            </Address>
            <Ext $w={35} $ml={20}>
              <svg width="35" height="22" viewBox="0 0 35 22" style={{ position: "absolute", left: 0, top: 0 }}>
                <path d="M10 20l2-8L25 2l6 5-13 9z" fill="#f2c200" stroke="#a88600" strokeWidth="1" />
                <path d="M25 2l3-2 5 4-2 3z" fill="#f08aa0" />
              </svg>
              <CssWord>CSS</CssWord>
            </Ext>
            <Ext $w={47} $ml={29}>
              <svg width="47" height="48" viewBox="0 0 47 48">
                <path d="M3 32L20 10l9 7-19 23-7 2z" fill="#cfcfcf" stroke="#888" />
                <path d="M19 11l7-10h8l-2 12-3 5z" fill="#444" />
                <rect x="27" y="27" width="20" height="21" rx="3" fill="#8f8f94" />
                <rect x="36" y="36" width="2" height="3" fill="#fff" />
              </svg>
            </Ext>
            <Ext $w={35} $ml={17}>
              <FaRecycle size={36} color="#5d6973" />
            </Ext>
            <Ext $w={32} $ml={32}>
              <svg width="32" height="32" viewBox="0 0 32 32">
                <path d="M3 4h7v28H3zM0 7h32v8H0z" fill="#dcb182" />
                <path d="M10 9h21" stroke="#a9763f" strokeDasharray="1 2" strokeWidth="2" />
              </svg>
            </Ext>
            <Ext $w={39} $ml={28}>
              <svg width="39" height="39" viewBox="0 0 39 39">
                <path d="M12 0h15l12 12v15L27 39H12L0 27V12z" fill="#d42011" />
                <text x="19.500" y="25" textAnchor="middle" fontFamily="Liberation Sans" fontSize="15" fontWeight="700" fill="#fff">
                  ABP
                </text>
              </svg>
            </Ext>
            <Ext $w={40} $ml={24}>
              <BlockI>I</BlockI>
            </Ext>
            <Ext $w={31} $ml={29}>
              <Burger>
                <BurgerBar />
                <BurgerBar />
                <BurgerBar />
              </Burger>
            </Ext>
          </Toolbar>
          <Viewport>
            <Page>
              <Stripe />
              <BlueBand />
              <SearchRow>
                <SearchBox>
                  vision zero
                  <LensGlyph size={28} c="#aaa" />
                </SearchBox>
                <Check />
                <CheckText>SEARCH WITHIN MAP</CheckText>
                <ActivityBtn>My Activity</ActivityBtn>
              </SearchRow>
              <MapArea>
                <MapDrawing />
                <City $x={811} $y={42} $size={24}>Sterling</City>
                <City $x={884} $y={180} $size={26}>Reston</City>
                <City $x={731} $y={408} $size={27}>Centreville</City>
                <City $x={1782} $y={176} $size={26} $track={1}>Bowie</City>
                <City $x={2125} $y={148} $size={26}>Annapolis</City>
                <City $x={2754} $y={528} $size={23}>Easton</City>
                <City $x={1303} $y={310} $size={31} $track={1.5}>Washington</City>
                <ClusterBox>
                  <ClusterText>4,877 Locations</ClusterText>
                </ClusterBox>
                <ZoomGroup>
                  <ZoomPair>
                    <ZoomCell>−</ZoomCell>
                    <ZoomCell $sep>+</ZoomCell>
                  </ZoomPair>
                  <ZoomSearch>
                    <LensGlyph size={24} c="#555" />
                  </ZoomSearch>
                </ZoomGroup>
                <Attribution>
                  Esri, HERE, DeLorme, MapmyIndia, © OpenStreetMap contributors, and the GIS user community |  DDOTGIS, PPSA
                </Attribution>
                <Basemap>
                  <svg width="40" height="40" viewBox="0 0 40 40">
                    <path d="M28 5a17 17 0 1 1-16 0" fill="none" stroke="#444" strokeWidth="5" />
                  </svg>
                  <BasemapWord>| MAP | SATELLITE</BasemapWord>
                  <Swatch $w={51} $h={21} $ml={26} />
                  <Swatch $w={51} $h={31} $ml={26} $on />
                  <Swatch $w={51} $h={42} $ml={24} />
                </Basemap>
              </MapArea>
              <Detail>
                <Inner>
                  <TitleRow>
                    <Back width="20" height="30" viewBox="0 0 20 30">
                      <path d="M18 1L3 15l15 14" fill="none" stroke="#ccc" strokeWidth="3.500" />
                    </Back>
                    <Title>Vision Zero Safety (Transportation)</Title>
                    <ActionBar>
                      <ActionLink>
                        <ArcgisGlyph />
                        Open In ArcGIS
                      </ActionLink>
                      <ActionLink>
                        <BubbleGlyph />
                        Comments (1)
                      </ActionLink>
                      <ActionLink>
                        <ShareGlyph />
                        Share
                      </ActionLink>
                      <PrimaryBtn $w={278} $ml={35}>
                        Download Dataset
                        <Caret />
                      </PrimaryBtn>
                      <PrimaryBtn $w={118} $dark>
                        APIs
                        <Caret />
                      </PrimaryBtn>
                    </ActionBar>
                  </TitleRow>
                  <TabBar>
                    <PageTab $w={121}>Details</PageTab>
                    <PageTab $w={108} $ml={21} $active>
                      Table
                    </PageTab>
                    <PageTab $w={119} $ml={21}>
                      Charts
                    </PageTab>
                    <Showing>Showing 4,877 of 4,877</Showing>
                  </TabBar>
                  <TableWrap>
                    <DataTable>
                      <colgroup>
                        {COLS.map((w, i) => (
                          <col key={i} width={w} />
                        ))}
                      </colgroup>
                      <thead>
                        <tr>
                          {HEAD.map((h) => (
                            <Th key={h}>{h}</Th>
                          ))}
                        </tr>
                      </thead>
                      <tbody>
                        {ROWS.map((r, i) => (
                          <Tr key={r[0]} $alt={i % 2 === 1}>
                            {r.map((c, j) => (
                              <Td key={j}>{c}</Td>
                            ))}
                          </Tr>
                        ))}
                      </tbody>
                    </DataTable>
                  </TableWrap>
                </Inner>
                <Panel>
                  <PanelSection $first>
                    <SectionName>Full Dataset</SectionName>
                    <FieldLabel $gap={15}>GeoJSON</FieldLabel>
                    <Field $focus>
                      <FieldText $selected>http://opendata.dc.gov/datasets/3f28bc3ad77f49079efee0ac05d8464c_0.geojson</FieldText>
                    </Field>
                    <FieldLabel $gap={33}>GeoService</FieldLabel>
                    <Field>
                      <FieldText>http://maps2.dcgis.dc.gov/dcgis/rest/services/DDOT/MapServer/0</FieldText>
                    </Field>
                  </PanelSection>
                  <PanelSection>
                    <SectionName>Filtered Dataset</SectionName>
                    <FieldLabel $gap={15}>GeoJSON</FieldLabel>
                    <Field>
                      <FieldText>http://opendata.dc.gov/datasets/3f28bc3ad77f49079efee0ac05d8464c_0.geojson</FieldText>
                    </Field>
                    <FieldLabel $gap={33}>GeoService</FieldLabel>
                    <Field>
                      <FieldText>http://maps2.dcgis.dc.gov/dcgis/rest/services/DDOT/MapServer/0</FieldText>
                    </Field>
                  </PanelSection>
                  <Tip>Press ⌘-C To Copy</Tip>
                </Panel>
              </Detail>
            </Page>
            <VTrack>
              <VThumb />
            </VTrack>
          </Viewport>
          <HTrack>
            <HThumb />
          </HTrack>
        </Win>
      </Desktop>
    </>
  );
}
